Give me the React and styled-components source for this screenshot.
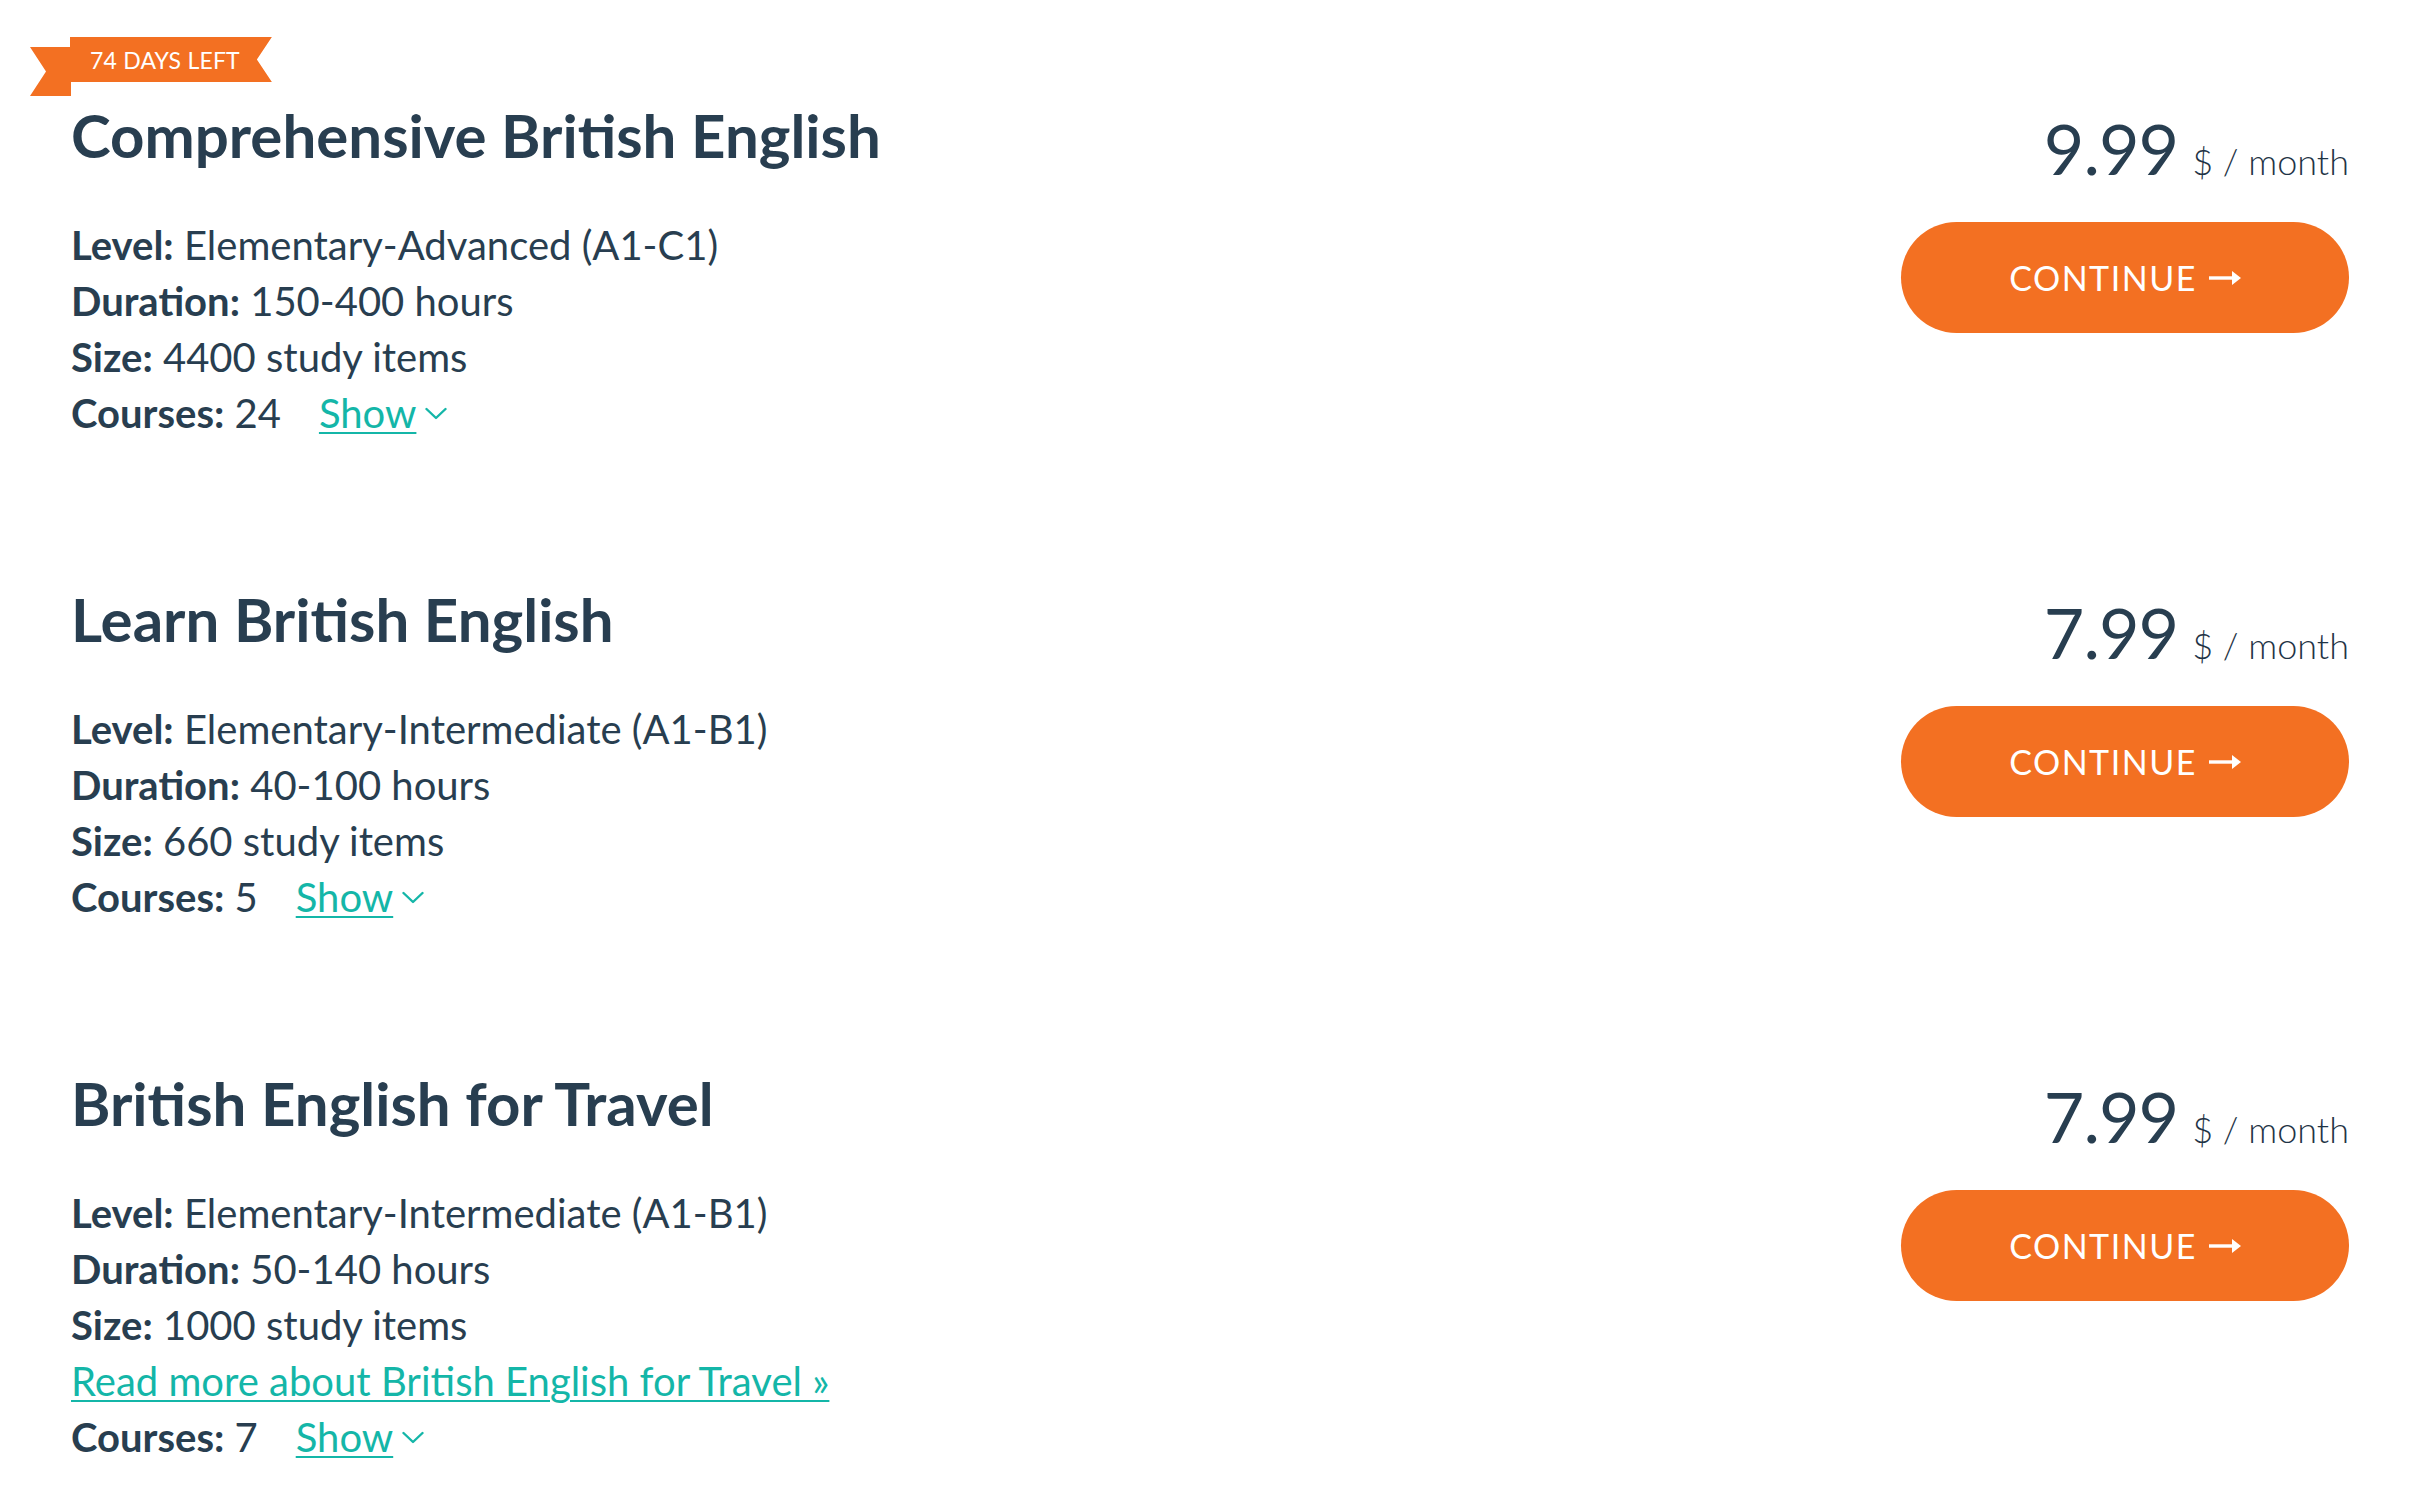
import { styled, createGlobalStyle } from "styled-components";

const ORANGE = "#f37022";
const INK = "#283e50";
const TEAL = "#14b6a8";

const courses = [
  {
    title: "Comprehensive British English",
    badge: "74 DAYS LEFT",
    level: "Elementary-Advanced (A1-C1)",
    duration: "150-400 hours",
    size: "4400 study items",
    courses: 24,
    price: "9.99",
  },
  {
    title: "Learn British English",
    level: "Elementary-Intermediate (A1-B1)",
    duration: "40-100 hours",
    size: "660 study items",
    courses: 5,
    price: "7.99",
  },
  {
    title: "British English for Travel",
    level: "Elementary-Intermediate (A1-B1)",
    duration: "50-140 hours",
    size: "1000 study items",
    readMore: "Read more about British English for Travel »",
    courses: 7,
    price: "7.99",
  },
];

export default function App() {
  return (
    <>
      <GlobalStyle />
      <Page>
        {courses.map((c) => (
          <Course key={c.title}>
            {c.badge && <Ribbon>{c.badge}</Ribbon>}
            <Info>
              <Title>{c.title}</Title>
              <Details>
                <Line>
                  <b>Level:</b> {c.level}
                </Line>
                <Line>
                  <b>Duration:</b> {c.duration}
                </Line>
                <Line>
                  <b>Size:</b> {c.size}
                </Line>
                {c.readMore && (
                  <Line>
                    <TextLink href="#">{c.readMore}</TextLink>
                  </Line>
                )}
                <Line>
                  <b>Courses:</b> {c.courses}
                  <ShowLink href="#">
                    <span>Show</span>
                    <svg width="22" height="13" viewBox="0 0 22 13" fill="none">
                      <polyline
                        points="1.5,2 11,11 20.5,2"
                        stroke={TEAL}
                        strokeWidth="2.4"
                        strokeLinecap="round"
                        strokeLinejoin="round"
                      />
                    </svg>
                  </ShowLink>
                </Line>
              </Details>
            </Info>
            <Buy>
              <Price>
                {c.price}
                <Per>$ / month</Per>
              </Price>
              <ContinueButton>
                CONTINUE
                <svg width="32" height="14" viewBox="0 0 32 14">
                  <rect x="0" y="5.3" width="25" height="3.4" fill="#fff" />
                  <polygon points="23,0 32,7 23,14" fill="#fff" />
                </svg>
              </ContinueButton>
            </Buy>
          </Course>
        ))}
      </Page>
    </>
  );
}

const GlobalStyle = createGlobalStyle`
    body{
        margin: 0;
        background: #fff;
        font-family: Lato, "Open Sans", sans-serif;
        color: ${INK};
    }
`;

const Page = styled.main`
    display: flex;
    flex-direction: column;
    gap: 141px;
    padding: 98px 63px 40px 71px;
`;

const Course = styled.section`
    position: relative;
    display: flex;
    justify-content: space-between;
    align-items: flex-start;
`;

const Ribbon = styled.div`
    position: absolute;
    top: -61px;
    left: -1px;
    height: 45px;
    padding: 0 32px 0 20px;
    display: flex;
    align-items: center;
    isolation: isolate;
    color: #fff;
    font-size: 23px;
    font-weight: 400;
    letter-spacing: 0.2px;
    &::before{
        content: "";
        position: absolute;
        left: -40px;
        top: 10px;
        width: 41px;
        height: 49px;
        background: ${ORANGE};
        clip-path: polygon(0 0, 100% 0, 100% 100%, 0 100%, 16px 50%);
        z-index: -1;
    }
    &::after{
        content: "";
        position: absolute;
        inset: 0;
        background: ${ORANGE};
        clip-path: polygon(0 0, 100% 0, calc(100% - 15px) 50%, 100% 100%, 0 100%);
        z-index: -1;
    }
`;

const Info = styled.div`
    display: flex;
    flex-direction: column;
`;

const Title = styled.h2`
    margin: 0;
    font-size: 60px;
    font-weight: 700;
    line-height: 74px;
    color: ${INK};
`;

const Details = styled.div`
    margin-top: 45px;
    font-size: 40px;
    line-height: 56px;
    b{
        font-weight: 700;
    }
`;

const Line = styled.div`
    white-space: nowrap;
`;

const TextLink = styled.a`
    color: ${TEAL};
    text-decoration: underline;
    text-decoration-thickness: 2px;
    text-underline-offset: 4px;
`;

const ShowLink = styled(TextLink)`
    margin-left: 38px;
    display: inline-flex;
    align-items: center;
    gap: 9px;
    text-decoration: none;
    span{
        text-decoration: underline;
        text-decoration-thickness: 2px;
        text-underline-offset: 4px;
    }
`;

const Buy = styled.div`
    display: flex;
    flex-direction: column;
    align-items: flex-end;
    padding-top: 15px;
`;

const Price = styled.div`
    display: flex;
    align-items: baseline;
    font-size: 70px;
    line-height: 1;
    font-weight: 400;
    letter-spacing: -1px;
`;

const Per = styled.span`
    margin-left: 14px;
    font-size: 36px;
    font-weight: 300;
    letter-spacing: 0;
    color: #1f3446;
`;

const ContinueButton = styled.button`
    margin-top: 39px;
    width: 448px;
    height: 111px;
    border: none;
    border-radius: 56px;
    background: ${ORANGE};
    color: #fff;
    font-family: Lato, "Open Sans", sans-serif;
    font-size: 34px;
    letter-spacing: 1.5px;
    display: flex;
    align-items: center;
    justify-content: center;
    gap: 12px;
    cursor: pointer;
`;
